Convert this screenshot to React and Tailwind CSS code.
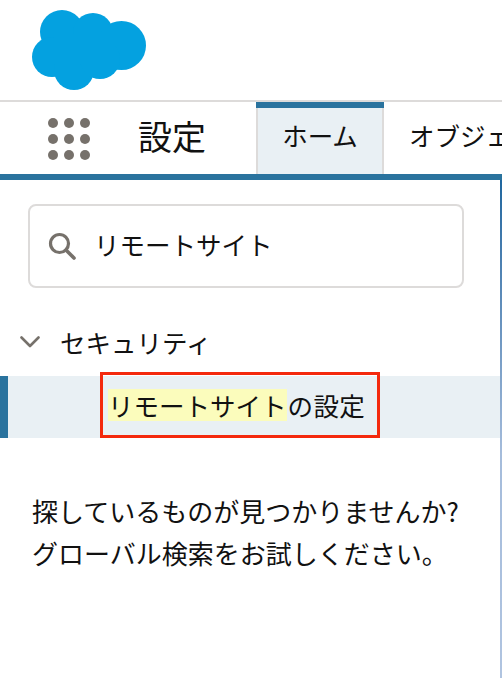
import React from "react";

const dots = [0, 1, 2, 3, 4, 5, 6, 7, 8];

const Cloud = () => (
  <svg width="114" height="80" viewBox="0 0 114 80" className="block">
    <g fill="#04a1e0">
      <circle cx="30" cy="22" r="22" />
      <circle cx="61" cy="23" r="20" />
      <circle cx="89.5" cy="35.5" r="24.5" />
      <circle cx="20" cy="47" r="20" />
      <circle cx="42" cy="60" r="20" />
      <circle cx="68" cy="49" r="20" />
      <rect x="22" y="24" width="60" height="30" />
    </g>
  </svg>
);

const SearchIcon = () => (
  <svg width="28" height="28" viewBox="0 0 28 28" fill="none" stroke="#76716b" className="block">
    <circle cx="11.5" cy="11.5" r="9" strokeWidth="3.2" />
    <path d="M18 18l8 8" strokeWidth="3.6" strokeLinecap="round" />
  </svg>
);

const Chevron = () => (
  <svg width="20" height="12" viewBox="0 0 20 12" fill="none" stroke="#76716b" className="block">
    <path d="M1.5 1.5L10 10l8.5-8.5" strokeWidth="2.6" strokeLinecap="round" strokeLinejoin="round" />
  </svg>
);

export default function App() {
  return (
    <div
      className="w-[502px] h-[678px] overflow-hidden bg-white text-[#111]"
      style={{ fontFamily: '"Noto Sans CJK JP", "Liberation Sans", sans-serif' }}
    >
      {/* logo */}
      <header className="h-[100px] pl-[32px] pt-[10px]">
        <Cloud />
      </header>

      {/* nav */}
      <nav className="h-[80px] border-t-2 border-b-[6px] border-t-[#dddbda] border-b-[#2a739e] flex overflow-hidden">
        <div className="w-[42px] shrink-0 ml-[48px] mt-[16px] grid grid-cols-3 gap-[6px] content-start">
          {dots.map((d) => (
            <div key={d} className="w-[10px] h-[10px] rounded-full bg-[#76716b]" />
          ))}
        </div>
        <div className="ml-[48px] w-[70px] shrink-0 text-[34px] leading-[68px] whitespace-nowrap">設定</div>
        <div className="ml-[48px] w-[128px] h-[72px] shrink-0 flex flex-col">
          <div className="h-[6px] bg-[#2a739e]" />
          <div className="flex-1 border-x-2 border-x-[#dddbda] bg-[#e9f0f4] text-[25.5px] leading-[54px] text-center whitespace-nowrap">
            ホーム
          </div>
        </div>
        <div className="ml-[25px] shrink-0 text-[25.5px] leading-[66px] whitespace-nowrap">オブジェクト</div>
      </nav>

      {/* sidebar */}
      <div className="flex h-[498px]">
        <main className="flex-1 min-w-0 pt-[24px]">
          <div className="ml-[28px] w-[436px] h-[84px] rounded-lg border-2 border-[#dddbda] flex items-center">
            <div className="ml-[18px]">
              <SearchIcon />
            </div>
            <span className="ml-[18px] mb-[5px] text-[25.5px] leading-none whitespace-nowrap">リモートサイト</span>
          </div>

          <div className="mt-[34px] h-[40px] flex items-center pl-[20px]">
            <Chevron />
            <span className="ml-[20px] text-[25.5px] leading-none whitespace-nowrap">セキュリティ</span>
          </div>

          <div className="relative mt-[14px] h-[62px] bg-[#e9f0f4] border-l-[8px] border-l-[#2a739e] flex items-center pl-[100px]">
            <span className="text-[25.5px] leading-[32px] whitespace-nowrap mb-[4px] flex">
              <span className="bg-[#fbfcbc] h-[32px]">リモートサイト</span>
              <span className="ml-[1px] tracking-[0.4px]">の設定</span>
            </span>
            <div className="absolute left-[92px] top-[-4px] w-[280px] h-[66px] border-[3px] border-[#f4290d]" />
          </div>

          <div className="mt-[52px] pl-[32px] text-[26px] leading-[42px] whitespace-nowrap">
            <p>探しているものが見つかりませんか?</p>
            <p>グローバル検索をお試しください。</p>
          </div>
        </main>
        <div className="w-[2px] shrink-0 bg-gradient-to-b from-[#1f679f] via-[#a5bcdb] via-55% to-[#b0c4e0]" />
      </div>
    </div>
  );
}
